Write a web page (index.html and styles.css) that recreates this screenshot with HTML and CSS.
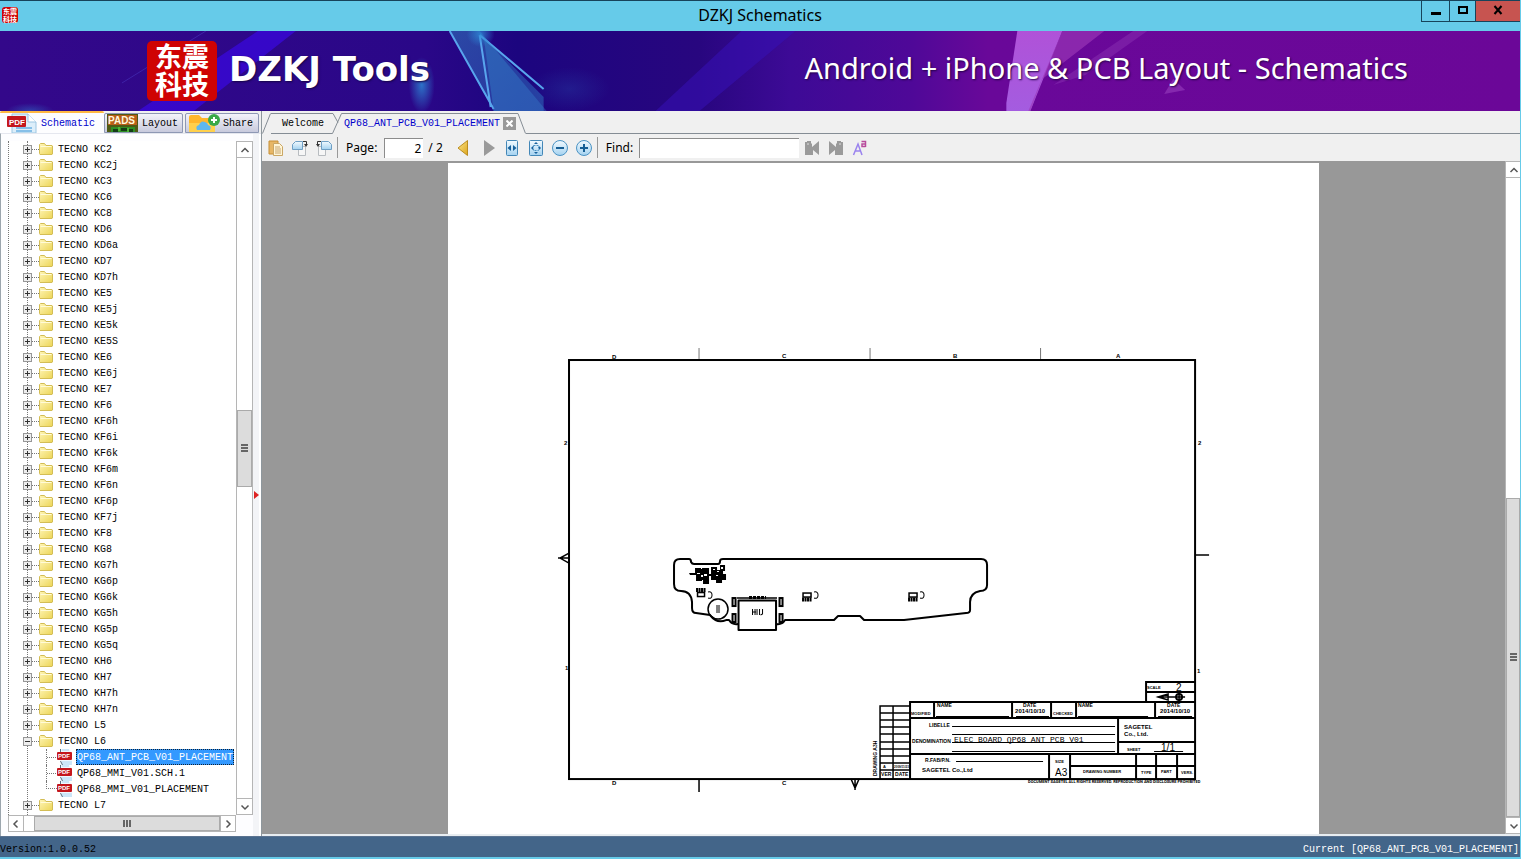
FILE: index.html
```html
<!DOCTYPE html>
<html lang="en">
<head>
    <meta charset="UTF-8">
    <meta name="viewport" content="width=device-width, initial-scale=1.0">
    <title>DZKJ Schematics</title>
    <link rel="stylesheet" href="styles.css">
</head>
<body>
    <!-- shared icons -->
    <svg class="defs" width="0" height="0" aria-hidden="true">
        <defs>
            <linearGradient id="gFolder" x1="0" y1="0" x2="1" y2="1">
                <stop offset="0" stop-color="#fff6b8"/>
                <stop offset="1" stop-color="#ecd557"/>
            </linearGradient>
            <linearGradient id="gBlue" x1="0" y1="0" x2="0" y2="1">
                <stop offset="0" stop-color="#f2faff"/>
                <stop offset="1" stop-color="#a4d2f0"/>
            </linearGradient>
            <linearGradient id="gGold" x1="0" y1="0" x2="1" y2="1">
                <stop offset="0" stop-color="#fbe68a"/>
                <stop offset="1" stop-color="#dda51c"/>
            </linearGradient>
        </defs>
        <symbol id="folder" viewBox="0 0 14 12">
            <path d="M.5 10.5v-9L1.500.5h4l1.500 2h6l.5.5v8l-.5.5h-12z" fill="url(#gFolder)" stroke="#d3bd55"/>
            <path d="M1.500 3.500h11" stroke="#fffbd8"/>
        </symbol>
        <symbol id="pdf" viewBox="0 0 16 16">
            <path d="M3 0h9l3 3v13H3z" fill="#eff7fd"/>
            <path d="M5 1h7M5 13h10M5 15h10" stroke="#a8d4f2"/>
            <path d="M3.500 0v3M3.500 12l2 4" stroke="#5c6f7f"/>
            <rect x="0" y="3" width="15" height="8" rx="1" fill="#c4161c"/>
            <text x="1" y="9" font-size="6" font-weight="bold" fill="#fff" font-family="Liberation Sans, sans-serif">PDF</text>
        </symbol>
        <symbol id="up" viewBox="0 0 10 10"><path d="M1.500 7 5 3.500 8.500 7" fill="none" stroke="#555" stroke-width="1.500"/></symbol>
        <symbol id="down" viewBox="0 0 10 10"><path d="M1.500 3.500 5 7l3.500-3.500" fill="none" stroke="#555" stroke-width="1.500"/></symbol>
        <symbol id="left" viewBox="0 0 10 10"><path d="M6.500 1.500 3 5l3.500 3.500" fill="none" stroke="#555" stroke-width="1.500"/></symbol>
        <symbol id="right" viewBox="0 0 10 10"><path d="M3.500 1.500 7 5 3.500 8.500" fill="none" stroke="#555" stroke-width="1.500"/></symbol>
    </svg>

    <div class="window">
        <header class="titlebar">
            <span class="seal seal-small">东震<br>科技</span>
            <h1>DZKJ Schematics</h1>
            <div class="window-buttons">
                <button type="button" class="min" aria-label="Minimize"><svg width="10" height="10"><path d="M0 7h10v3H0z"/></svg></button>
                <button type="button" class="max" aria-label="Maximize"><svg width="10" height="10"><path d="M1 2h8v6H1z" fill="none" stroke="#000" stroke-width="2"/></svg></button>
                <button type="button" class="close" aria-label="Close"><svg width="10" height="10"><path d="M1.500 1l7 8M8.500 1l-7 8" fill="none" stroke="#000" stroke-width="2"/></svg></button>
            </div>
        </header>

        <div class="banner">
            <svg class="banner-art" viewBox="0 0 1521 80" preserveAspectRatio="none" aria-hidden="true">
                <defs>
                    <linearGradient id="gBanner">
                        <stop offset="0" stop-color="#33088a"/>
                        <stop offset=".28" stop-color="#2a0788"/>
                        <stop offset=".34" stop-color="#1c057f"/>
                        <stop offset=".46" stop-color="#28067f"/>
                        <stop offset=".52" stop-color="#3d0a96"/>
                        <stop offset=".60" stop-color="#4f0898"/>
                        <stop offset=".65" stop-color="#690899"/>
                        <stop offset="1" stop-color="#6b0798"/>
                    </linearGradient>
                    <linearGradient id="gShard" x1="0" y1="0" x2="1" y2="1">
                        <stop offset="0" stop-color="#2f78bd" stop-opacity=".9"/>
                        <stop offset="1" stop-color="#3465bf" stop-opacity=".7"/>
                    </linearGradient>
                    <radialGradient id="gGlow">
                        <stop offset="0" stop-color="#2e8cd8" stop-opacity=".8"/>
                        <stop offset="1" stop-color="#2e8cd8" stop-opacity="0"/>
                    </radialGradient>
                    <linearGradient id="gPink" x1="0" y1="0" x2="0" y2="1">
                        <stop offset="0" stop-color="#b052d8"/>
                        <stop offset="1" stop-color="#a45ce0"/>
                    </linearGradient>
                </defs>
                <rect width="1521" height="80" fill="url(#gBanner)"/>
                <path d="M258 0h38L194 80h-56z" fill="#3a08dd" opacity=".75"/>
                <path d="M206 0 122 52" stroke="#4735bd" opacity=".6"/>
                <ellipse cx="422" cy="54" rx="13" ry="28" fill="url(#gGlow)"/>
                <ellipse cx="30" cy="80" rx="24" ry="8" fill="url(#gGlow)" opacity=".5"/>
                <path d="M450 0h30l67 80h-53z" fill="url(#gShard)" opacity=".65"/>
                <path d="M450 0l44 78M480 4l11 72M480 4l64 54" stroke="#58a5ed" stroke-width="2" fill="none"/>
                <path d="M484 6l60 60v14h-50z" fill="#3284cc" opacity=".45"/>
                <ellipse cx="481" cy="3" rx="14" ry="13" fill="url(#gGlow)"/>
                <ellipse cx="570" cy="58" rx="40" ry="22" fill="url(#gGlow)" opacity=".2"/>
                <path d="M656 80 742 0h54l-96 80z" fill="#3711b7" opacity=".55"/>
                <path d="M1018 0h45l-32 80h-24v-8z" fill="url(#gPink)"/>
                <path d="M1063 0h42l-62 48-12 32h-2z" fill="#9c39b9" opacity=".65"/>
                <path d="M1134 0h14l-62 44-32 10z" fill="#9941be" opacity=".35"/>
                <path d="m1174 48 12 11-21 4z" fill="#9136b8" opacity=".7"/>
            </svg>
            <span class="seal seal-big">东震<br>科技</span>
            <strong class="brand">DZKJ Tools</strong>
            <span class="tagline">Android + iPhone &amp; PCB Layout - Schematics</span>
        </div>

        <main class="workspace">
            <aside class="sidebar">
                <div class="side-tabs">
                    <button type="button" class="side-tab active">
                        <svg width="32" height="20" viewBox="0 0 32 20">
                            <path d="M5 1h16l8 8v11H5z" fill="#dceefa" stroke="#9cc6e2"/>
                            <path d="M21 1v8h8" fill="#fff" stroke="#9cc6e2"/>
                            <path d="M9 15h16M9 18h16" stroke="#86bfe8" stroke-width="2"/>
                            <rect y="3" width="19" height="11" rx="1" fill="#c4161c"/>
                            <text x="2" y="12" font-size="8" font-weight="bold" fill="#fff" font-family="Liberation Sans, sans-serif">PDF</text>
                        </svg>
                        <span>Schematic</span>
                    </button>
                    <button type="button" class="side-tab">
                        <svg width="32" height="18" viewBox="0 0 32 18">
                            <rect width="31" height="18" fill="#4f5a15"/>
                            <path d="M1 1h29v10H1z" fill="#b85f18"/>
                            <text x="1" y="10" font-size="10" font-weight="bold" fill="#fff8dc" font-family="Liberation Sans, sans-serif">PADS</text>
                            <path d="M4 13h24v5H4z" fill="#2e8e24"/>
                            <path d="M6 15h5v3H6zM14 14h6v3h-6zM22 15h4v3h-4z" fill="#143d16"/>
                            <path d="M12 13v4M21 14v4" stroke="#6edb47"/>
                        </svg>
                        <span>Layout</span>
                    </button>
                    <button type="button" class="side-tab share">
                        <svg width="32" height="18" viewBox="0 0 32 18">
                            <path d="M1 18V3q0-2 2-2h8l3 3h11q2 0 2 2v12z" fill="#ffb62b"/>
                            <path d="M1 9h26v9H1z" fill="#ffd04c"/>
                            <path d="M9 16q-2-4 2-5 2-5 6-3 3 1 3 3 4 1 2 5z" fill="#5eb7ef"/>
                            <circle cx="26" cy="6" r="6" fill="#39a947"/>
                            <path d="M26 3v6M23 6h6" stroke="#fff" stroke-width="2"/>
                        </svg>
                        <span>Share</span>
                    </button>
                </div>
                <div class="side-body">
                    <div class="tree-grid">
                        <ul class="tree" id="tree"></ul>
                        <div class="scroll vertical side-vscroll">
                            <button type="button" aria-label="Scroll up"><svg><use href="#up"/></svg></button>
                            <div class="track"><div class="thumb"></div></div>
                            <button type="button" aria-label="Scroll down"><svg><use href="#down"/></svg></button>
                        </div>
                        <div class="scroll horizontal side-hscroll">
                            <button type="button" aria-label="Scroll left"><svg><use href="#left"/></svg></button>
                            <div class="track"><div class="thumb"></div></div>
                            <button type="button" aria-label="Scroll right"><svg><use href="#right"/></svg></button>
                        </div>
                    </div>
                    <div class="splitter"><svg width="5" height="8"><path d="M0 0l5 4-5 4z" fill="#d22"/></svg></div>
                </div>
            </aside>

            <section class="content">
                <nav class="doc-tabs">
                    <svg width="9" height="21"><path d="M.5 20.500 8.500.5" /></svg>
                    <button type="button" class="doc-tab">Welcome</button>
                    <svg width="16" height="21"><path d="M0 .5h6l5 9M0 20.500h5.500L14.500.5H16"/></svg>
                    <div class="doc-tab open">
                        <button type="button">QP68_ANT_PCB_V01_PLACEMENT</button>
                        <button type="button" class="tab-close" aria-label="Close tab"><svg width="7" height="7"><path d="M.5.5l6 6M6.500.5l-6 6" stroke="#fff" stroke-width="2"/></svg></button>
                    </div>
                    <svg width="9" height="21"><path d="M0 .5h1l7.500 20"/></svg>
                    <span class="tab-rest"></span>
                </nav>

                <div class="toolbar">
                    <button type="button" aria-label="Copy">
                        <svg viewBox="0 0 16 16"><path d="M1 1h9v13H1z" fill="#e7b766" stroke="#c78f34"/><path d="M5.500 3.500h6l3 3v9h-9z" fill="#fff5d6" stroke="#caa765"/><path d="M7 7h5M7 9h6M7 11h6M7 13h6" stroke="#c7a670"/></svg>
                    </button>
                    <button type="button" aria-label="Rotate right">
                        <svg viewBox="0 0 16 16"><path d="M6.500 6.500h7v9h-7z" fill="#f6f6f6" stroke="#b8bcc0"/><path d="M.5 4.500l3-3h7v8H.5z" fill="url(#gBlue)" stroke="#6f9fc4"/><path d="M11 1.500h3.500V5" fill="none" stroke="#333"/><path d="M12 4h4l-2 3z" fill="#333"/></svg>
                    </button>
                    <button type="button" aria-label="Rotate left">
                        <svg viewBox="0 0 16 16"><path d="M2.500 6.500h7v9h-7z" fill="#f6f6f6" stroke="#b8bcc0"/><path d="M5.500 1.500h7l3 3v5h-10z" fill="url(#gBlue)" stroke="#6f9fc4"/><path d="M5 1.500H1.500V5" fill="none" stroke="#333"/><path d="M0 4h4L2 7z" fill="#333"/></svg>
                    </button>
                    <span class="divider"></span>
                    <label for="page">Page:</label>
                    <input type="text" id="page" class="page-input" value="2">
                    <span class="page-total">/ 2</span>
                    <button type="button" class="prev" aria-label="Previous page">
                        <svg viewBox="0 0 16 16"><path d="M12.500.5v15L3 8z" fill="url(#gGold)" stroke="#bb8d20"/></svg>
                    </button>
                    <button type="button" class="next" aria-label="Next page">
                        <svg viewBox="0 0 16 16"><path d="M3 0v16l11-8z" fill="#9a9a9a"/></svg>
                    </button>
                    <button type="button" aria-label="Fit width">
                        <svg viewBox="0 0 16 16"><rect x="2.500" y=".5" width="11" height="15" rx="1" fill="url(#gBlue)" stroke="#4387b7"/><path d="M7 5v6L3.500 8zM9 5v6l3.500-3z" fill="#17619c"/></svg>
                    </button>
                    <button type="button" aria-label="Fit page">
                        <svg viewBox="0 0 16 16"><rect x="1.500" y=".5" width="13" height="15" rx="1" fill="url(#gBlue)" stroke="#4387b7"/><path d="M8 2l2 2H6zM8 14l2-2H6zM3 8l2-2v4zM13 8l-2-2v4z" fill="#17619c"/><rect x="5.500" y="5.500" width="5" height="5" fill="none" stroke="#4c91c3" stroke-dasharray="2 1"/></svg>
                    </button>
                    <button type="button" aria-label="Zoom out">
                        <svg viewBox="0 0 16 16"><circle cx="8" cy="8" r="7.500" fill="url(#gBlue)" stroke="#4b93c4"/><path d="M4 8h8" stroke="#175f95" stroke-width="2"/></svg>
                    </button>
                    <button type="button" aria-label="Zoom in">
                        <svg viewBox="0 0 16 16"><circle cx="8" cy="8" r="7.500" fill="url(#gBlue)" stroke="#4b93c4"/><path d="M4 8h8M8 4v8" stroke="#175f95" stroke-width="2"/></svg>
                    </button>
                    <span class="divider"></span>
                    <label for="find">Find:</label>
                    <input type="text" id="find" class="find-input">
                    <button type="button" aria-label="Find previous">
                        <svg viewBox="0 0 16 16"><path d="M1 2h2V1h4v2l1 1v3l7-6v14l-6-5v5H1z" fill="#9a9a9a"/><path d="M3 4h2" stroke="#ddd"/></svg>
                    </button>
                    <button type="button" aria-label="Find next">
                        <svg viewBox="0 0 16 16"><path d="M15 2h-2V1H9v2L8 4v3L1 1v14l6-5v5h8z" fill="#9a9a9a"/><path d="M11 4h2" stroke="#ddd"/></svg>
                    </button>
                    <button type="button" class="case" aria-label="Match case">
                        <svg viewBox="0 0 16 16"><path d="M1.500 15 6 4l4 11M3.500 11h5" fill="none" stroke="#9a83ee" stroke-width="1.500"/><path d="M9.500 1.500h4v5.500M13.500 4h-3.500v2.500h3.500" fill="none" stroke="#b84b9c" stroke-width="1.500"/></svg>
                    </button>
                </div>

                <div class="viewer">
                    <div class="canvas">
                        <div class="sheet">
                            <svg class="drawing" viewBox="448 163 870 671" preserveAspectRatio="xMidYMin meet">
                                <!-- sheet frame -->
                                <g fill="none" stroke="#000" stroke-width="2">
                                    <rect x="569" y="360" width="626" height="419"/>
                                    <path d="M569 553l-9 5 9 5M558 558h11M1195 555h14M851 779l4 9 4-9M855 779v11M699 779v13" stroke-width="1.500"/>
                                    <path d="M699 348v11M870 348v11M1040.500 348v11" stroke="#777" stroke-width="1"/>
                                </g>
                                <g class="t6 b">
                                    <text x="612" y="359">D</text><text x="782" y="358">C</text><text x="953" y="358">B</text><text x="1116" y="358">A</text>
                                    <text x="612" y="785">D</text><text x="782" y="785">C</text>
                                    <text x="564" y="445">2</text><text x="1198" y="445">2</text><text x="565" y="670">1</text><text x="1197" y="673">1</text>
                                </g>

                                <!-- board outline -->
                                <g fill="none" stroke="#000" stroke-width="2" stroke-linejoin="round">
                                    <path d="M738 624q-6 1-9-4h-3q-9 4-16-5l-14-2q-4 0-4-5v-6q-1-11-11-11-7 0-7-7v-19q0-6 6-6h9q2 0 2 3 1 2 3 2h24q2 0 2-3 0-2 3-2h258q6 0 6 6v20q0 6-7 6-10 2-10 11v8q0 3-4 3l-62 7h-40l-4-4h-22l-4 4h-49q-3 5-9 4"/>
                                    <circle cx="718" cy="609" r="10" stroke-width="1.500"/>
                                    <path d="M738.500 600.500h37.500v29.500h-37.500z"/>
                                    <path d="M737 598h40" stroke-width="1.500"/>
                                </g>
                                <g stroke="#000" fill="none">
                                    <rect x="732.500" y="598" width="3" height="8" stroke-width="2"/><rect x="779.500" y="598" width="3" height="8" stroke-width="2"/>
                                    <rect x="732.500" y="614" width="3" height="8" stroke-width="2"/><rect x="779.500" y="614" width="3" height="8" stroke-width="2"/>
                                    <path d="M749 597.500h17" stroke-width="3" stroke-dasharray="3 1"/>
                                    <path d="M752.500 609v6M755 609v6M757 609v6M759.500 609v6M762.500 609v5l-2 1M753 612h3" />
                                    <path d="M716 606h4M716 608h4M716 610h4M716 612h4"/>
                                    <rect x="697.500" y="592.500" width="7" height="4" stroke-width="1.500"/><path d="M696 590h10" stroke-width="4" stroke-dasharray="2 .5"/><path d="M708 592q4-1 4 3t-4 3"/>
                                    <rect x="803" y="593" width="8" height="4" stroke-width="1.500"/><path d="M802 599.500h10" stroke-width="4" stroke-dasharray="2 .5"/><path d="M814 592q4-1 4 3t-4 3"/>
                                    <rect x="909" y="593" width="8" height="4" stroke-width="1.500"/><path d="M908 599.500h10" stroke-width="4" stroke-dasharray="2 .5"/><path d="M920 592q4-1 4 3t-4 3"/>
                                </g>
                                <path d="M689 573h6v-5h6v1h1v-1h7v6h2v-7h6v3h3v-5h5v6h-2v3h3v6h-4v3h-6v-3h-5v-4h-2v8h-6v-4h-1v1h-6v-6h-6z"/>
                                <path d="M697 573h3v1h-3zM704 574h3v2h-3zM713 569h2v1h-2zM721 567h2v2h-2zM716 575h2v1h-2zM701 575h2v2h-2zM709 576h1v3h-1zM717 571h2v1h-2z" fill="#fff"/>

                                <!-- title block -->
                                <g fill="none" stroke="#000" stroke-width="2">
                                    <path d="M1146 702v-20h49M1146 692h49"/>
                                    <path d="M910 779v-77h285M910 718h285M910 754h285M1118 718v36M1118 742h77"/>
                                    <path d="M934 702v16M1012 702v16M1051 702v16M1076 702v16M1155 702v16"/>
                                    <path d="M1049 754v25M1070 754v25M1070 766h125M1136 754v25M1156 754v25M1177 754v25"/>
                                    <path d="M880 779v-73h30M893 706v73M880 713h30M880 720h30M880 727h30M880 734h30M880 742h30M880 749h30M880 756h30M880 763h30M880 770h30" stroke-width="1.500"/>
                                    <path d="M936 716.500h73M1016 716.500h33M1078 716.500h70M1158 716.500h34M952 726.500h163M952 734.500h163M952 742.500h163M952 751.500h163M956 761.500h87M1154 751.500h29" stroke-width="1"/>
                                    <path d="M1158 697l10-3v6zM1157 697h28M1179 693v9" stroke-width="1.500"/>
                                    <circle cx="1179" cy="697" r="3"/>
                                </g>
                                <g class="t4 b">
                                    <text x="1147" y="689">SCALE</text>
                                    <text x="911" y="715">MODIFIED</text><text x="1053" y="715">CHECKED</text>
                                    <text x="1127" y="751">SHEET</text><text x="1055" y="763">SIZE</text>
                                    <text x="1083" y="773">DRAWING NUMBER</text><text x="1141" y="774">TYPE</text><text x="1161" y="773">PART</text><text x="1181" y="774">VERS.</text>
                                    <text x="883" y="768">A</text>
                                </g>
                                <text class="t3 b" x="894" y="768">2009/11/23</text>
                                <g class="t5 b">
                                    <text x="937" y="707">NAME</text><text x="1023" y="707">DATE</text><text x="1078" y="707">NAME</text><text x="1167" y="707">DATE</text>
                                    <text x="929" y="727">LIBELLE</text><text x="912" y="743">DENOMINATION</text><text x="925" y="762">R.FAB/P.N.</text>
                                    <text x="881" y="776">VER</text><text x="895" y="776">DATE</text>
                                    <text transform="translate(877 776) rotate(-90)">DRAWING A3H</text>
                                </g>
                                <g class="t6 b">
                                    <text x="1015" y="713">2014/10/10</text><text x="1160" y="713">2014/10/10</text>
                                    <text x="1124" y="729">SAGETEL</text><text x="1124" y="736">Co., Ltd.</text><text x="922" y="772">SAGETEL Co.,Ltd</text>
                                </g>
                                <g class="mono">
                                    <text x="954" y="742">ELEC BOARD QP68 ANT PCB V01</text>
                                </g>
                                <g class="t9">
                                    <text x="1176" y="691">2</text><text x="1055" y="776">A3</text><text x="1161" y="751">1/1</text>
                                </g>
                                <text class="t4 b notice" x="1028" y="783">DOCUMENT SAGETEL ALL RIGHTS RESERVED. REPRODUCTION AND DISCLOSURE PROHIBITED</text>
                            </svg>
                        </div>
                    </div>
                    <div class="scroll vertical page-scroll">
                        <button type="button" aria-label="Scroll up"><svg><use href="#up"/></svg></button>
                        <div class="track"><div class="thumb"></div></div>
                        <button type="button" aria-label="Scroll down"><svg><use href="#down"/></svg></button>
                    </div>
                </div>
            </section>
        </main>

        <footer class="statusbar">
            <span>Version:1.0.0.52</span>
            <span class="current">Current [QP68_ANT_PCB_V01_PLACEMENT]</span>
        </footer>
    </div>

    <script>
        const models = ['KC2', 'KC2j', 'KC3', 'KC6', 'KC8', 'KD6', 'KD6a', 'KD7', 'KD7h', 'KE5', 'KE5j', 'KE5k', 'KE5S',
            'KE6', 'KE6j', 'KE7', 'KF6', 'KF6h', 'KF6i', 'KF6k', 'KF6m', 'KF6n', 'KF6p', 'KF7j', 'KF8', 'KG8', 'KG7h',
            'KG6p', 'KG6k', 'KG5h', 'KG5p', 'KG5q', 'KH6', 'KH7', 'KH7h', 'KH7n', 'L5', 'L6', 'L7'];
        const files = {
            L6: ['QP68_ANT_PCB_V01_PLACEMENT', 'QP68_MMI_V01.SCH.1', 'QP68_MMI_V01_PLACEMENT']
        };

        let rows = '';
        models.forEach(function (model) {
            const open = files[model];
            rows += '<li class="node"><button type="button" class="expander' + (open ? ' open' : '') + '" aria-label="Toggle TECNO ' + model + '"></button>' +
                '<i class="dash"></i><svg class="folder"><use href="#folder"/></svg><span>TECNO ' + model + '</span></li>';
            (open || []).forEach(function (file, i) {
                rows += '<li class="node file"><i class="dash"></i><svg class="pdf"><use href="#pdf"/></svg>' +
                    '<span class="label' + (i === 0 ? ' selected' : '') + '">' + file + '</span></li>';
            });
        });
        document.getElementById('tree').innerHTML = rows;
    </script>
</body>
</html>
```
FILE: styles.css
```css
* {
    box-sizing: border-box;
}

body {
    margin: 0;
    font-family: "Liberation Mono", monospace;
    font-size: 10px;
    color: #000;
}

button {
    font: inherit;
    color: inherit;
    padding: 0;
    border: none;
    background: none;
}

.defs {
    position: absolute;
}

.window {
    display: flex;
    flex-direction: column;
    height: 100vh;
    overflow: hidden;
    border-right: 1px solid #66cbe9;
    border-bottom: 2px solid #66cbe9;
}

/* title bar */
.titlebar {
    display: grid;
    grid-template-columns: 100px 1fr 100px;
    flex: none;
    height: 31px;
    background: #66cbe9;
    border-top: 1px solid #17435a;
}

.titlebar h1 {
    margin: 0;
    font: 16px/29px "Noto Sans", sans-serif;
    text-align: center;
}

.seal {
    background: #cf0303;
    color: #fff;
    font-family: "Noto Sans CJK SC", sans-serif;
    font-weight: bold;
    text-align: center;
}

.seal-small {
    width: 16px;
    height: 16px;
    margin: 6px 2px;
    border-radius: 3px;
    font-size: 7px;
    line-height: 8px;
}

.window-buttons {
    display: flex;
    justify-content: flex-end;
    height: 21px;
}

.window-buttons button {
    width: 28px;
    border: 1px solid #17435a;
    border-top: none;
    border-right: none;
}

.window-buttons .max {
    width: 26px;
}

.window-buttons .close {
    width: 45px;
    background: #c75450;
}

/* banner */
.banner {
    display: flex;
    align-items: center;
    flex: none;
    height: 80px;
    position: relative;
    color: #fff;
    font-family: "Noto Sans", sans-serif;
}

.banner-art {
    position: absolute;
    width: 100%;
    height: 100%;
}

.banner > span,
.banner > strong {
    position: relative;
}

.seal-big {
    width: 70px;
    height: 60px;
    margin-left: 147px;
    border-radius: 5px;
    font-size: 27px;
    line-height: 28px;
    padding-top: 1px;
}

.brand {
    margin-left: 12px;
    padding-bottom: 4px;
    font: bold 34px/60px "DejaVu Sans", sans-serif;
    text-shadow: 1px 1px 2px #150546;
}

.tagline {
    margin-left: auto;
    margin-right: 112px;
    padding-bottom: 8px;
    font-size: 29px;
    font-weight: 400;
    text-shadow: 1px 1px 2px #24024a;
}

/* left panel */
.workspace {
    display: flex;
    flex: 1;
    min-height: 0;
    background: #f0f0f0;
}

.sidebar {
    display: flex;
    flex-direction: column;
    width: 262px;
    flex: none;
    border-right: 1px solid #8e979d;
}

.side-tabs {
    display: flex;
    align-items: flex-end;
    height: 22px;
    flex: none;
}

.side-tab {
    display: flex;
    align-items: center;
    gap: 3px;
    width: 79px;
    height: 20px;
    margin-right: 2px;
    padding: 0 2px;
    border: 1px solid #8e98b4;
    border-radius: 2px 2px 0 0;
    background: linear-gradient(#f3f3fa, #c8cadd);
}

.side-tab.active {
    width: 104px;
    height: 22px;
    padding: 0 0 0 7px;
    gap: 2px;
    margin-right: 0;
    border: none;
    border-top: 2px solid #ffb842;
    background: #fdfdff;
    color: #00c;
}

.side-tab.share {
    width: 74px;
}

.side-body {
    display: flex;
    flex: 1;
    min-height: 0;
    background: #fdfdff;
    border-left: 1px solid #9ca6ae;
    border-top: 1px solid #e5e7ef;
}

.tree-grid {
    display: grid;
    grid-template: minmax(0, 1fr) 17px / 228px 17px;
    padding: 7px 0 4px 7px;
}

.tree {
    position: relative;
    margin: 0;
    padding: 0;
    list-style: none;
    overflow: hidden;
    background: #fff;
}

.tree::before,
.tree::after {
    content: '';
    position: absolute;
    top: 0;
    bottom: 0;
    left: 0;
    border-left: 1px dotted #777;
}

.tree::after {
    left: 19px;
}

.node {
    display: flex;
    align-items: center;
    height: 16px;
    padding-left: 15px;
    white-space: nowrap;
}

.expander {
    position: relative;
    z-index: 1;
    width: 9px;
    height: 9px;
    border: 1px solid #979797;
    background: linear-gradient(#333, #333) center / 5px 1px no-repeat, linear-gradient(#333, #333) center / 1px 5px no-repeat, #eee;
}

.expander.open {
    background: linear-gradient(#333, #333) center / 5px 1px no-repeat, #eee;
}

.dash {
    width: 7px;
    border-top: 1px dotted #777;
}

.folder {
    width: 14px;
    height: 12px;
    margin-right: 5px;
}

.file {
    padding-left: 38px;
}

.file .dash {
    width: 11px;
    height: 16px;
    border-top: none;
    border-left: 1px dotted #777;
    background: repeating-linear-gradient(90deg, #777 0 1px, #fff 1px 2px) 0 8px / 100% 1px no-repeat;
}

.file:nth-last-child(2) .dash {
    height: 8px;
    align-self: flex-start;
    border-bottom: 1px dotted #777;
    background: none;
}

.pdf {
    width: 16px;
    height: 16px;
    margin-right: 3px;
}

.label {
    height: 16px;
    padding: 0 1px;
    line-height: 18px;
}

.label.selected {
    background: #3399ff;
    color: #fff;
    outline: 1px dotted #123;
    outline-offset: -1px;
}

/* scroll bars */
.scroll {
    display: flex;
    background: #fff;
    border: 1px solid #b5b5b5;
}

.scroll.vertical {
    flex-direction: column;
}

.scroll button {
    flex: none;
    display: grid;
    place-items: center;
    width: 15px;
    height: 16px;
}

.scroll button svg {
    width: 10px;
    height: 10px;
}

.scroll.vertical button:first-child {
    border-bottom: 1px solid #b5b5b5;
}

.scroll.vertical button:last-child {
    border-top: 1px solid #b5b5b5;
}

.scroll.horizontal button {
    height: 15px;
    border-right: 1px solid #b5b5b5;
}

.scroll.horizontal button:last-child {
    border-right: none;
    border-left: 1px solid #b5b5b5;
}

.track {
    display: flex;
    flex: 1;
    min-width: 0;
    min-height: 0;
}

.vertical .track {
    flex-direction: column;
}

.thumb {
    border: 1px solid #aaa;
    background: repeating-linear-gradient(#666 0 2px, #dcdcdc 2px 3px) center / 7px 8px no-repeat, #dcdcdc;
}

.side-vscroll .thumb {
    height: 12%;
    margin-top: 252px;
}

.side-hscroll .thumb {
    flex: 1;
    margin-left: 10px;
    background: repeating-linear-gradient(90deg, #666 0 2px, #dcdcdc 2px 3px) center / 8px 7px no-repeat, #dcdcdc;
}

.splitter {
    flex: 1;
    display: flex;
    align-items: center;
    padding-left: 1px;
    padding-top: 19px;
    background: #f3f4f7;
    border-right: 2px solid #fff;
}

/* document area */
.content {
    display: flex;
    flex-direction: column;
    flex: 1;
    min-width: 0;
}

.doc-tabs {
    display: flex;
    align-items: flex-end;
    flex: none;
    height: 23px;
}

.doc-tabs > svg {
    flex: none;
    fill: none;
    stroke: #858d95;
}

.doc-tab {
    width: 56px;
    height: 21px;
    padding: 0 2px 0 10px;
    border: solid #858d95;
    border-width: 1px 0;
}

.doc-tab.open {
    display: flex;
    align-items: center;
    justify-content: space-between;
    width: 174px;
    padding: 0 1px;
    border-bottom-color: transparent;
    color: #00c;
}

.tab-close {
    display: grid;
    place-items: center;
    width: 13px;
    height: 13px;
    background: #999;
}

.tab-rest {
    flex: 1;
    border-bottom: 1px solid #858d95;
}

.toolbar {
    display: flex;
    align-items: center;
    flex: none;
    height: 27px;
    padding-left: 6px;
    gap: 8px;
    font: 12px/16px "Noto Sans", sans-serif;
}

.toolbar button,
.toolbar button svg {
    display: block;
    flex: none;
    width: 16px;
    height: 16px;
}

.divider {
    width: 1px;
    height: 21px;
    margin: 0 0 0 -3px;
    background: #999;
}

.toolbar input {
    height: 20px;
    margin: 0;
    padding: 0 2px;
    border: solid #8c8c8c;
    border-width: 1px 0 0 1px;
    background: #fff;
    font: inherit;
}

.toolbar .page-input {
    width: 39px;
    margin-left: -1px;
    text-align: right;
}

.page-total {
    margin: 0 4px 0 -3px;
}

.toolbar .next {
    margin: 0 -1px 0 2px;
}

.toolbar .find-input {
    width: 160px;
    margin: 0 -3px 0 -2px;
}

.viewer {
    display: flex;
    flex: 1;
    min-height: 0;
    background: #989898;
    border-bottom: 2px solid #e8edf1;
}

.canvas {
    display: flex;
    justify-content: center;
    flex: 1;
    min-width: 0;
    padding-top: 2px;
}

.sheet {
    width: 70%;
    background: #fff;
    overflow: hidden;
}

.drawing {
    display: block;
    width: 100%;
    font-family: "Liberation Sans", sans-serif;
}

.t3 {
    font-size: 3px;
}

.t4 {
    font-size: 4px;
}

.t5 {
    font-size: 5px;
}

.t6 {
    font-size: 6px;
}

.t9 {
    font-size: 10px;
}

.b {
    font-weight: bold;
}

.notice {
    font-family: Roboto, sans-serif;
}

.mono {
    font: 8px "Liberation Mono", monospace;
}

.page-scroll {
    width: 15px;
    border-right: none;
}

.page-scroll .track {
    justify-content: flex-end;
}

.page-scroll .thumb {
    height: 50%;
}

/* status bar */
.statusbar {
    display: flex;
    justify-content: space-between;
    align-items: flex-end;
    flex: none;
    height: 21px;
    padding: 0 1px 0 0;
    line-height: 15px;
    background: #436589;
    border-top: 1px solid #5a7290;
}

.current {
    color: #fff;
}
```
